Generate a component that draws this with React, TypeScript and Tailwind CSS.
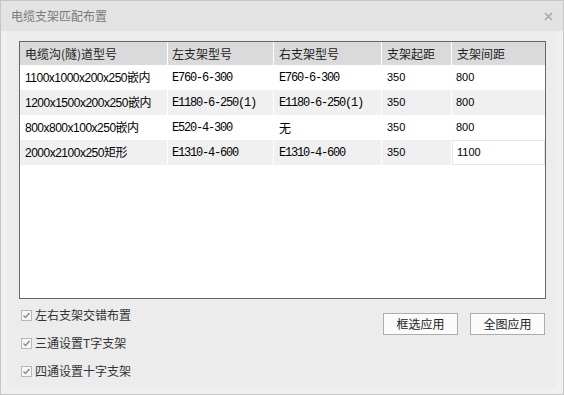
import React from "react";

const cjk = "font-['Noto_Sans_CJK_SC',sans-serif]";
const mono = "text-[12px] tracking-[-1.2px] font-['Liberation_Mono','Noto_Sans_CJK_SC',monospace]";

const rows = [
  { ditch: "1100x1000x200x250嵌内", left: "E760-6-300", right: "E760-6-300", start: "350", gap: "800" },
  { ditch: "1200x1500x200x250嵌内", left: "E1180-6-250(1)", right: "E1180-6-250(1)", start: "350", gap: "800" },
  { ditch: "800x800x100x250嵌内", left: "E520-4-300", right: "无", start: "350", gap: "800" },
  { ditch: "2000x2100x250矩形", left: "E1310-4-600", right: "E1310-4-600", start: "350", gap: "1100" },
];

const CheckBox = ({ label }: { label: string }) => (
  <div className="flex h-[28px] items-center">
    <div className="ml-[2px] flex h-[11px] w-[11px] items-center justify-center border border-[#b8b8b8] bg-[#f6f6f6]">
      <svg width="9" height="9" viewBox="0 0 9 9">
        <path d="M1.5 4.5 L3.5 6.5 L7.5 2" fill="none" stroke="#8c8c8c" strokeWidth="1.4" />
      </svg>
    </div>
    <span className="ml-[3px] text-[12px] text-[#333]">{label}</span>
  </div>
);

const Btn = ({ children }: { children: React.ReactNode }) => (
  <button className="flex h-[22px] w-[75px] items-center justify-center border border-[#adadad] bg-[#fbfbfb] text-[12px] text-[#222]">
    {children}
  </button>
);

export default function App() {
  return (
    <div className={`flex h-[395px] w-[564px] flex-col border border-[#c6c6c6] bg-[#f0f0f0] ${cjk}`}>
      {/* title bar */}
      <div className="flex h-[30px] shrink-0 items-center justify-between bg-[#e3e3e3] pl-[10px] pr-[10px]">
        <span className="text-[12px] text-[#7a7a7a]">电缆支架匹配布置</span>
        <svg width="9" height="9" viewBox="0 0 9 9">
          <path d="M1 1 L8 8 M8 1 L1 8" stroke="#a8a8a8" strokeWidth="1.6" />
        </svg>
      </div>

      <div className="mx-[6px] mb-[7px] flex flex-1 flex-col bg-[#ececec] pl-[12px] pr-[11px] pt-[10px]">
        {/* table */}
        <div className="h-[258px] border border-[#666] bg-white">
          <div className="flex h-[23px] bg-[#dadada] text-[12px] text-[#222]">
            <div className="flex w-[148px] items-center border-r border-white pl-[5px]">电缆沟(隧)道型号</div>
            <div className="flex w-[106px] items-center border-r border-white pl-[4px]">左支架型号</div>
            <div className="flex w-[108px] items-center border-r border-white pl-[5px]">右支架型号</div>
            <div className="flex w-[70px] items-center border-r border-white pl-[5px]">支架起距</div>
            <div className="flex flex-1 items-center pl-[5px]">支架间距</div>
          </div>
          {rows.map((r, i) => (
            <div key={i} className={`flex h-[25px] text-black ${i % 2 === 1 ? "bg-[#f0f0f0]" : "bg-white"}`}>
              <div className="flex w-[148px] items-center border-r border-white pl-[5px] text-[12px] tracking-[-0.5px] font-['Liberation_Sans','Noto_Sans_CJK_SC',sans-serif]">
                {r.ditch}
              </div>
              <div className={`flex w-[106px] items-center border-r border-white pl-[4px] ${mono}`}>{r.left}</div>
              <div
                className={`flex w-[108px] items-center border-r border-white pl-[5px] ${
                  r.right === "无" ? "text-[12px]" : mono
                }`}
              >
                {r.right}
              </div>
              <div className="flex w-[70px] items-center border-r border-white pl-[5px] text-[11px] font-['Liberation_Sans',sans-serif]">
                {r.start}
              </div>
              <div
                className={`flex flex-1 items-center pl-[4px] text-[11px] font-['Liberation_Sans',sans-serif] ${
                  i === 3 ? "border border-[#dfe6ee] bg-white" : ""
                }`}
              >
                {r.gap}
              </div>
            </div>
          ))}
        </div>

        {/* options */}
        <div className="mt-[2px] flex justify-between">
          <div className="flex flex-col">
            <CheckBox label="左右支架交错布置" />
            <CheckBox label="三通设置T字支架" />
            <CheckBox label="四通设置十字支架" />
          </div>
          <div className="mr-[1px] mt-[12px] flex gap-[12px] self-start">
            <Btn>框选应用</Btn>
            <Btn>全图应用</Btn>
          </div>
        </div>
      </div>
    </div>
  );
}
